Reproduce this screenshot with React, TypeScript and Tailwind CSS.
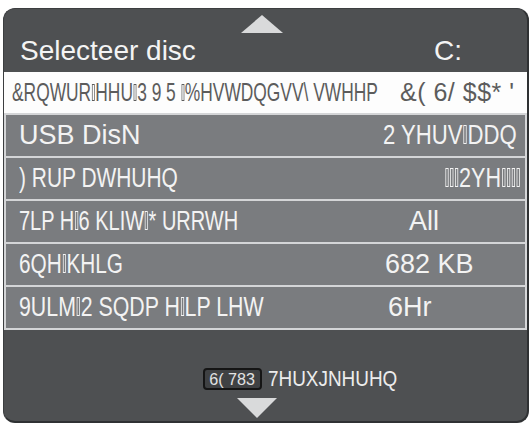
import React from 'react';

// a glyph the player's font could not map, drawn as the usual thin box
const NoGlyph: React.FC = () => (
  <span className="inline-block w-[4px] h-[0.7em] border border-current mx-[1px]" />
);

const Mojibake: React.FC<{ text: string; className?: string }> = ({ text, className }) =>
{
  const parts = text.split('▯');
  return (
    <span className={`inline-block whitespace-nowrap ${className ?? ''}`}>
      {parts.map((p, i) => (
        <React.Fragment key={i}>
          {p}
          {i < parts.length - 1 && <NoGlyph />}
        </React.Fragment>
      ))}
    </span>
  );
};

interface Row
{
  label: string;
  labelClass: string;
  value: string;
  valueClass: string;
}

const rows: Row[] = [
  { label: 'USB DisN', labelClass: '', value: '2 YHUV▯DDQ', valueClass: 'pl-0 origin-left scale-x-[0.82]' },
  { label: ') RUP DWHUHQ', labelClass: 'origin-left scale-x-[0.775]', value: '▯▯▯2YH▯▯▯▯', valueClass: 'pl-[77px] origin-left scale-x-[0.8]' },
  { label: '7LP H▯6 KLIW▯* URRWH', labelClass: 'origin-left scale-x-[0.74]', value: 'All', valueClass: 'pl-[26px]' },
  { label: '6QH▯KHLG', labelClass: 'origin-left scale-x-[0.77]', value: '682 KB', valueClass: 'pl-[2px]' },
  { label: '9ULM▯2 SQDP H▯LP LHW', labelClass: 'origin-left scale-x-[0.79]', value: '6Hr', valueClass: 'pl-[5px]' },
];

const Triangle: React.FC<{ up?: boolean; className?: string }> = ({ up, className }) => (
  <svg viewBox="0 0 40 20" className={className} preserveAspectRatio="none">
    <polygon points={up ? '20,0 40,20 0,20' : '0,0 40,0 20,20'} fill="#d9dadb" />
  </svg>
);

export default function App()
{
  return (
    <div className="w-[532px] h-[425px] bg-white pt-[8px] pl-[3px] font-['Liberation_Sans',Arial,sans-serif]">
      <div className="w-[526px] h-[415px] rounded-[12px] bg-[#4e5052] border border-[#3c3e40] border-r-2 border-b-2 border-r-[#2f3133] border-b-[#2f3133] overflow-hidden flex flex-col">
        {/* header */}
        <div className="h-[63px] shrink-0 flex flex-col">
          <div className="pt-[6px] pl-[237px]">
            <Triangle up className="w-[42px] h-[18px] block" />
          </div>
          <div className="h-[36px] flex items-center text-[28px] text-[#f4f4f4] leading-none">
            <div className="w-[430px] shrink-0 pl-[16px]">Selecteer disc</div>
            <div>C:</div>
          </div>
        </div>

        {/* selected row */}
        <div className="h-[41px] shrink-0 bg-[#fdfdfd] flex items-center text-[25px] text-[#5c5c5c] leading-none overflow-hidden">
          <div className="w-[396px] shrink-0 pl-[8px]">
            <Mojibake text="&RQWUR▯HHU▯3 9 5 ▯%HVWDQGVV\ VWHHP" className="origin-left scale-x-[0.695]" />
          </div>
          <Mojibake text="&( 6/ $$* '" className="tracking-[0.5px]" />
        </div>

        {/* other rows */}
        <div className="shrink-0 bg-[#d4d5d7] px-[2px] py-[2px] flex flex-col gap-[2px]">
          {rows.map((r) => (
            <div key={r.label} className="h-[41px] bg-[#7a7c7f] flex items-center text-[27px] text-[#f3f3f3] leading-none overflow-hidden">
              <div className="w-[377px] shrink-0 pl-[13px]">
                <Mojibake text={r.label} className={r.labelClass} />
              </div>
              <div className="whitespace-nowrap">
                <Mojibake text={r.value} className={r.valueClass} />
              </div>
            </div>
          ))}
        </div>

        {/* footer */}
        <div className="flex-1 flex flex-col pt-[38px]">
          <div className="h-[22px] flex items-center pl-[199px]">
            <div className="w-[59px] h-[22px] shrink-0 flex items-center justify-center rounded-[4px] border-2 border-[#151515] bg-[#3f4143] text-[17px] text-[#e2e2e2] leading-none">
              <Mojibake text="6( 783" className="scale-x-[0.95]" />
            </div>
            <div className="ml-[6px] text-[22px] text-[#ececec] leading-none">
              <Mojibake text="7HUXJNHUHQ" className="origin-left scale-x-[0.86]" />
            </div>
          </div>
          <div className="mt-[8px] pl-[233px]">
            <Triangle className="w-[40px] h-[20px] block" />
          </div>
        </div>
      </div>
    </div>
  );
}
